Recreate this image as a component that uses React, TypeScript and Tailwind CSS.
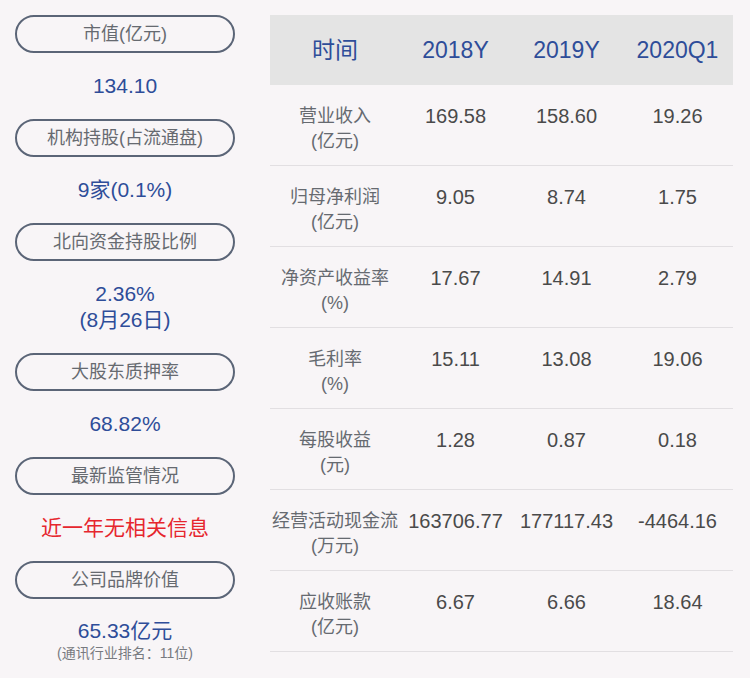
import React from 'react';

const font = { fontFamily: '"Liberation Sans", "Noto Sans CJK SC", sans-serif' };

type Row = { label: string; unit: string; values: string[] };

const rows: Row[] = [
  { label: '营业收入', unit: '(亿元)', values: ['169.58', '158.60', '19.26'] },
  { label: '归母净利润', unit: '(亿元)', values: ['9.05', '8.74', '1.75'] },
  { label: '净资产收益率', unit: '(%)', values: ['17.67', '14.91', '2.79'] },
  { label: '毛利率', unit: '(%)', values: ['15.11', '13.08', '19.06'] },
  { label: '每股收益', unit: '(元)', values: ['1.28', '0.87', '0.18'] },
  { label: '经营活动现金流', unit: '(万元)', values: ['163706.77', '177117.43', '-4464.16'] },
  { label: '应收账款', unit: '(亿元)', values: ['6.67', '6.66', '18.64'] },
];

function Pill({ children }: { children: React.ReactNode }) {
  return (
    <div className="h-[38px] rounded-full border-2 border-[#5b6577] flex items-center justify-center text-[18px] text-[#666a70]">
      {children}
    </div>
  );
}

function Value({ children, red }: { children: React.ReactNode; red?: boolean }) {
  return (
    <div className={`flex flex-col items-center justify-center text-[21px] leading-[26px] ${red ? 'text-[#e6262e]' : 'text-[#2e4d99]'}`}>
      {children}
    </div>
  );
}

export default function App() {
  return (
    <div style={font} className="w-[750px] h-[678px] bg-[#f8f5f7] flex overflow-hidden">
      {/* left summary column */}
      <div className="w-[220px] ml-[15px] mt-[15px] flex flex-col">
        <Pill>市值(亿元)</Pill>
        <div className="h-[66px] flex items-center justify-center"><Value>134.10</Value></div>
        <Pill>机构持股(占流通盘)</Pill>
        <div className="h-[66px] flex items-center justify-center"><Value>9家(0.1%)</Value></div>
        <Pill>北向资金持股比例</Pill>
        <div className="h-[92px] flex items-center justify-center">
          <Value>
            <span>2.36%</span>
            <span>(8月26日)</span>
          </Value>
        </div>
        <Pill>大股东质押率</Pill>
        <div className="h-[66px] flex items-center justify-center"><Value>68.82%</Value></div>
        <Pill>最新监管情况</Pill>
        <div className="h-[66px] flex items-center justify-center"><Value red>近一年无相关信息</Value></div>
        <Pill>公司品牌价值</Pill>
        <div className="pt-[19px] flex flex-col items-center">
          <span className="text-[21px] leading-[26px] text-[#2e4d99]">65.33亿元</span>
          <span className="text-[14px] leading-[18px] text-[#777a80]">(通讯行业排名：11位)</span>
        </div>
      </div>

      {/* right table */}
      <div className="w-[463px] ml-[35px] mt-[15px]">
        <div className="h-[70px] bg-[#e4e4e4] grid grid-cols-[130px_111px_111px_111px] items-center text-center text-[23px] text-[#2e4d99]">
          <span>时间</span>
          <span>2018Y</span>
          <span>2019Y</span>
          <span>2020Q1</span>
        </div>
        {rows.map((r) => (
          <div
            key={r.label}
            className="h-[81px] border-b border-[#e2dfe2] grid grid-cols-[130px_111px_111px_111px] items-start pt-[19px] text-center"
          >
            <div className="flex flex-col text-[18px] leading-[25px] text-[#666a70]">
              <span className="whitespace-nowrap">{r.label}</span>
              <span>{r.unit}</span>
            </div>
            {r.values.map((v, i) => (
              <span key={i} className="text-[20px] leading-[25px] text-[#4a4a4a] whitespace-nowrap">
                {v}
              </span>
            ))}
          </div>
        ))}
      </div>
    </div>
  );
}
